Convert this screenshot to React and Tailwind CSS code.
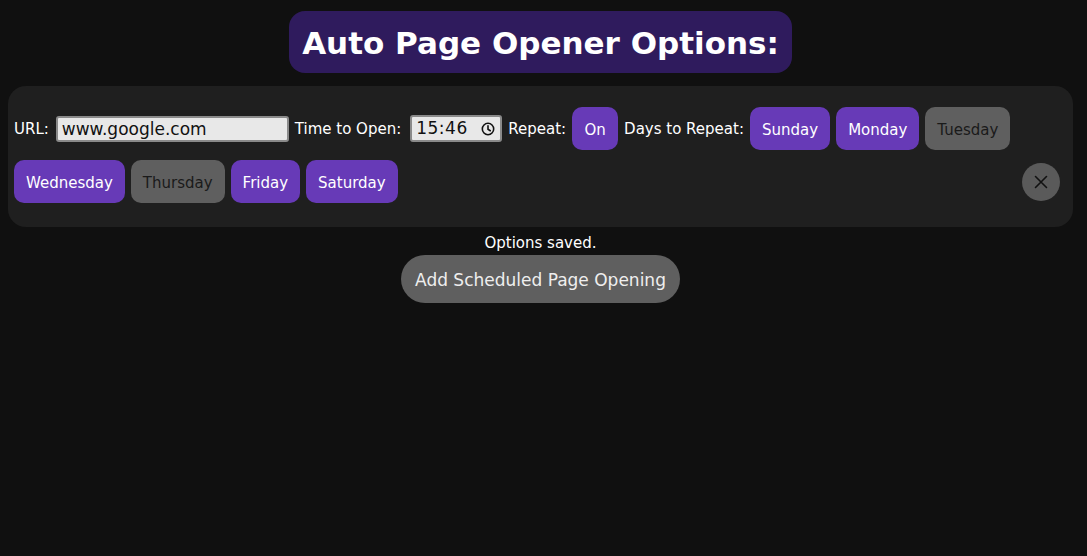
import React, { useState } from 'react';

const DAYS = [
    { name: 'Sunday', on: true },
    { name: 'Monday', on: true },
    { name: 'Tuesday', on: false },
    { name: 'Wednesday', on: true },
    { name: 'Thursday', on: false },
    { name: 'Friday', on: true },
    { name: 'Saturday', on: true },
];

const body = { fontFamily: '"DejaVu Sans", Verdana, sans-serif' };

const DayButton = ({ name, on, onClick }) => (
    <button
        onClick={onClick}
        className={`h-[43px] px-3 pt-[3px] rounded-[10px] text-[15px] ${on ? 'bg-[#673ab7] text-white' : 'bg-[#5f5f5f] text-[#1a1a1a]'}`}
    >
        {name}
    </button>
);

const App = () => {
    const [days, setDays] = useState(DAYS);
    const [repeat, setRepeat] = useState(true);

    const toggleDay = (i) => {
        setDays(days.map((d, j) => (j === i ? { ...d, on: !d.on } : d)));
    };

    return (
        <div className="min-h-[556px] w-full bg-[#101010] text-white pt-[11px] pl-2 pr-[14px]" style={body}>
            {/* Title */}
            <div className="flex justify-center">
                <h1 className="h-[62px] px-[13px] pt-[3px] flex items-center rounded-2xl bg-[#2f1b5d] text-[31px] font-bold text-white">
                    Auto Page Opener Options:
                </h1>
            </div>

            {/* Schedule entry */}
            <div className="mt-[13px] rounded-[18px] bg-[#1f1f1f] pl-[6px] pr-[13px] pt-[21px] pb-[24px] flex flex-wrap items-center gap-x-[6px] gap-y-[10px] text-[15px]">
                <span className="pt-px">URL:</span>
                <input
                    defaultValue="www.google.com"
                    className="ml-px w-[233px] h-[26px] px-1 rounded-[3px] border-2 border-[#8a8a8a] bg-[#e8e8e8] text-[#111] text-[17px] outline-none"
                />
                <span className="pt-px mr-[3px]">Time to Open:</span>
                <div className="w-[92px] h-[27px] pl-1 pr-[5px] rounded-[3px] border-2 border-[#8a8a8a] bg-[#e8e8e8] text-[#111] text-[17px] flex items-center justify-between">
                    <span className="tracking-[0.5px]">15:46</span>
                    <svg width="14" height="14" viewBox="0 0 16 16" fill="none" stroke="#111" strokeWidth="1.8">
                        <circle cx="8" cy="8" r="6.5" />
                        <path d="M8 4.2V8.3L10.6 10" strokeLinecap="round" />
                    </svg>
                </div>
                <span className="pt-px">Repeat:</span>
                <button
                    onClick={() => setRepeat(!repeat)}
                    className={`h-[43px] w-[46px] pt-[3px] rounded-[10px] text-[15px] ${repeat ? 'bg-[#673ab7] text-white' : 'bg-[#5f5f5f] text-[#1a1a1a]'}`}
                >
                    {repeat ? 'On' : 'Off'}
                </button>
                <span className="pt-px">Days to Repeat:</span>
                {days.map((d, i) => (
                    <DayButton key={d.name} name={d.name} on={d.on} onClick={() => toggleDay(i)} />
                ))}
                <button className="ml-auto w-[38px] h-[38px] rounded-full bg-[#5a5a5a] flex items-center justify-center">
                    <svg width="14" height="14" viewBox="0 0 14 14" stroke="#111" strokeWidth="1.6" strokeLinecap="round">
                        <path d="M1.5 1.5L12.5 12.5M12.5 1.5L1.5 12.5" />
                    </svg>
                </button>
            </div>

            <div className="flex flex-col items-center">
                <p className="mt-[7px] text-[15px] leading-[18px]">Options saved.</p>
                <button className="mt-[3px] h-[48px] px-[14px] pt-[4px] rounded-full bg-[#5f5f5f] text-[17px] text-[#eeeeee]">
                    Add Scheduled Page Opening
                </button>
            </div>
        </div>
    );
};

export default App;
